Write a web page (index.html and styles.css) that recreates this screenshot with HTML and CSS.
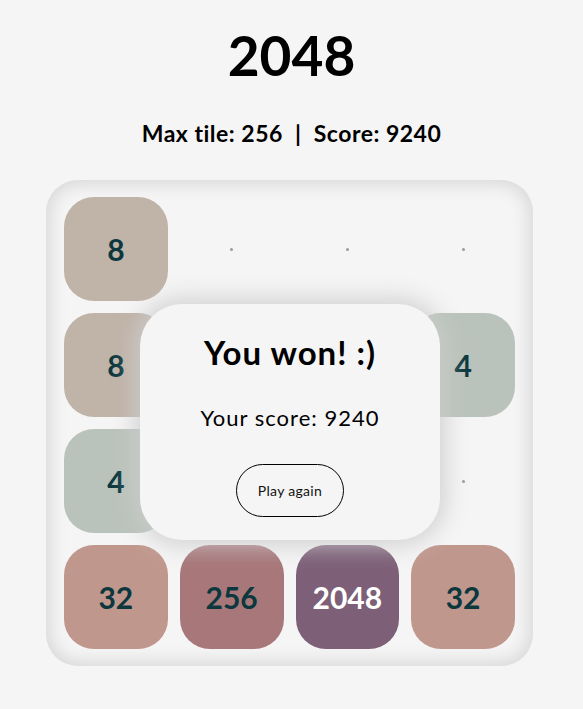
FILE: index.html
```html
<!DOCTYPE html>
<html>
<head>
<meta charset="utf-8">
<link rel="stylesheet" href="styles.css">
</head>
<body>
<div class="page">
  <h1 class="title">2048</h1>
  <div class="stats">Max tile: 256 &nbsp;|&nbsp; Score: 9240</div>
  <div class="board">
    <div class="grid">
      <div class="cell tile t8">8</div>
      <div class="cell"><span class="dot"></span></div>
      <div class="cell"><span class="dot"></span></div>
      <div class="cell"><span class="dot"></span></div>

      <div class="cell tile t8">8</div>
      <div class="cell"><span class="dot"></span></div>
      <div class="cell"><span class="dot"></span></div>
      <div class="cell tile t4">4</div>

      <div class="cell tile t4">4</div>
      <div class="cell"><span class="dot"></span></div>
      <div class="cell"><span class="dot"></span></div>
      <div class="cell"><span class="dot"></span></div>

      <div class="cell tile t32">32</div>
      <div class="cell tile t256">256</div>
      <div class="cell tile t2048">2048</div>
      <div class="cell tile t32">32</div>
    </div>
    <div class="modal">
      <div class="modal-title">You won! :)</div>
      <div class="modal-score">Your score: 9240</div>
      <button class="again">Play again</button>
    </div>
  </div>
</div>
</body>
</html>
```

FILE: styles.css
```css
html, body {
  margin: 0;
  padding: 0;
  background: #f5f5f5;
}
body {
  font-family: "Lato", "Noto Sans", sans-serif;
  color: #000;
}
.page {
  display: flex;
  flex-direction: column;
  align-items: center;
  padding-top: 22px;
}
.title {
  margin: 0;
  font-size: 55px;
  font-weight: 700;
  line-height: 66px;
  letter-spacing: 0;
}
.stats {
  margin-top: 30px;
  font-size: 23px;
  font-weight: 700;
  line-height: 30px;
  letter-spacing: 0.5px;
}
.board {
  position: relative;
  margin-top: 32px;
  margin-right: 4px;
  width: 487px;
  height: 486px;
  box-sizing: border-box;
  border-radius: 32px;
  background: #f5f5f5;
  box-shadow: inset 0 0 18px 4px rgba(0, 0, 0, 0.12);
  padding: 17px 18px;
}
.grid {
  display: grid;
  grid-template-columns: repeat(4, 1fr);
  grid-template-rows: repeat(4, 1fr);
  gap: 12px;
  height: 100%;
}
.cell {
  display: flex;
  align-items: center;
  justify-content: center;
  border-radius: 30px;
}
.dot {
  width: 3px;
  height: 3px;
  border-radius: 50%;
  background: #9a9a9a;
}
.tile {
  font-size: 30px;
  font-weight: 700;
  color: #0b373d;
}
.t8 { background: #c0b3a8; }
.t4 { background: #bac3bb; }
.t32 { background: #c0978d; }
.t256 { background: #a8777a; }
.t2048 { background: #7d6078; color: #ffffff; }

.modal {
  position: absolute;
  left: 94px;
  top: 124px;
  width: 300px;
  height: 236px;
  box-sizing: border-box;
  border-radius: 42px;
  background: #f5f5f5;
  box-shadow: 0 0 22px 6px rgba(205, 205, 205, 0.85);
  display: flex;
  flex-direction: column;
  align-items: center;
  padding-top: 28px;
}
.modal-title {
  font-size: 33px;
  font-weight: 700;
  line-height: 40px;
  letter-spacing: 1px;
}
.modal-score {
  margin-top: 31px;
  font-size: 22px;
  font-weight: 400;
  line-height: 30px;
  letter-spacing: 1px;
}
.again {
  margin-top: 31px;
  width: 108px;
  height: 53px;
  border: 1px solid #000;
  border-radius: 27px;
  background: transparent;
  font-family: "Lato", "Noto Sans", sans-serif;
  font-size: 14px;
  letter-spacing: 0.3px;
  color: #111;
  padding: 0;
}
```
